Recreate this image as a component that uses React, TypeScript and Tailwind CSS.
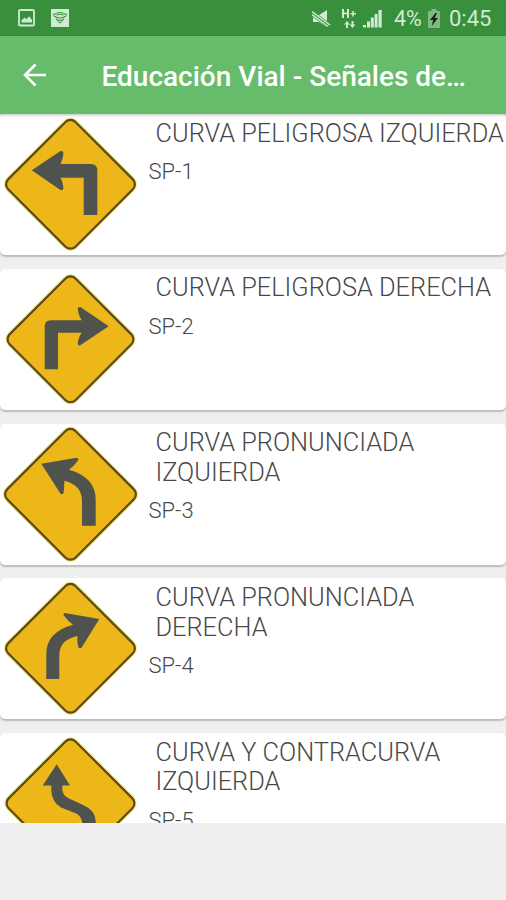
import { ReactNode } from 'react';

type Sign = {
  code: string;
  title: string;
  size: number;
  arrow: string;
};

// size is half the diagonal of the sign's diamond
const signs: Sign[] = [
  {
    code: 'SP-1',
    title: 'CURVA PELIGROSA IZQUIERDA',
    size: 66.3,
    arrow:
      'M31.7 56.3L60.5 37Q63.5 36.5 63.5 39.5Q63 45 60.5 50H91Q97.3 50 97.3 56.5V101H83.7V63.7H60.5Q63 68 63.5 74Q63 77 60.5 76Z',
  },
  {
    code: 'SP-2',
    title: 'CURVA PELIGROSA DERECHA',
    size: 64.8,
    arrow:
      'M108.7 57.3L80.3 38Q77.5 37.5 77.7 40.5Q78.5 46 81.5 51.3H51Q44.7 51.3 44.7 57.5V100.3H58V63.7H81.5Q78.5 68 77.7 73.7Q77.7 77 80.3 76.3Z',
  },
  {
    code: 'SP-3',
    title: 'CURVA PRONUNCIADA IZQUIERDA',
    size: 67.3,
    arrow:
      'M41.3 39.7L76.5 33.7Q79 34.2 78 36.5Q74 42 69 45.7Q95.7 53 95.7 76V101.7H82V77Q82 61 64.3 56.7Q64.5 63 63.5 69Q62 71.5 60 69Z',
  },
  {
    code: 'SP-4',
    title: 'CURVA PRONUNCIADA DERECHA',
    size: 66.3,
    arrow:
      'M99.3 41L65 35Q62.8 35.5 63.8 37.5Q68 43 73 46.7Q46.3 54 46.3 76V101H59.3V77Q59.3 62 77.3 58Q77 64 78.3 69Q80 71.5 82 69Z',
  },
  {
    code: 'SP-5',
    title: 'CURVA Y CONTRACURVA IZQUIERDA',
    size: 65.8,
    arrow:
      'M56.7 31.2L42.7 52.5H51.3V58Q52 69 61 74.5L75 80Q82.3 83 82.3 92V102H95.7V88Q95 77 83 72L70 66Q62.3 63 62.3 56V52.5H70Z',
  },
];

function SignPicture({ size, arrow }: { size: number; arrow: string }) {
  const side = (size + 2) * Math.SQRT2;
  return (
    <svg className="block h-[141px] w-[148px] shrink-0" viewBox="0 0 148 141">
      <g transform="translate(70.5 70.3) rotate(45)">
        <rect x={-side / 2} y={-side / 2} width={side} height={side} rx="8" fill="#edb719" stroke="#eee873" strokeWidth="3" />
        <rect x={-side / 2 + 0.7} y={-side / 2 + 0.7} width={side - 1.4} height={side - 1.4} rx="7" fill="#edb719" stroke="#5c4923" strokeWidth="2.2" />
      </g>
      <path d={arrow} fill="#50534d" />
    </svg>
  );
}

function SignCard({ sign }: { sign: Sign }) {
  return (
    <li className="flex h-[141px] shrink-0 overflow-hidden rounded-[5px] bg-white shadow-[0_1.5px_1.5px_#bdbdbd]">
      <SignPicture size={sign.size} arrow={sign.arrow} />
      <div className="min-w-0 flex-1 pt-[4.5px]">
        <h2 className="-mr-2 pl-[7.5px] text-[25.35px] leading-[29.7px] font-light text-[#484848]">{sign.title}</h2>
        <p className="mt-[9.5px] pl-[0.5px] text-[22px] leading-[27px] font-light text-[#484848]">{sign.code}</p>
      </div>
    </li>
  );
}

function StatusIcon({ width, children }: { width: number; children: ReactNode }) {
  return (
    <svg width={width} height="20" viewBox={`0 0 ${width} 20`} className="shrink-0" fill="#d1ead2">
      {children}
    </svg>
  );
}

function StatusBar() {
  return (
    <div className="flex h-9 shrink-0 items-center bg-[#388f3c] text-[#d1ead2]">
      <div className="flex gap-4 pl-[18px]">
        <StatusIcon width={17}>
          <rect x="1" y="2" width="15" height="15.5" rx="1" fill="none" stroke="#d1ead2" strokeWidth="1.8" />
          <path d="M3.5 14.5v-2l3-3 2 1.8 2.5-3 3 3.5v2.7z" />
        </StatusIcon>
        <StatusIcon width={19}>
          <rect y="1" width="18" height="18" />
          <path
            d="M2 7Q9 2 16 7M3 8Q9 12 15 8M5.5 7Q9 5.5 12.5 7M5 11Q9 14 13 11M7 13.5Q9 16 11 13.5"
            fill="none"
            stroke="#388f3c"
            strokeWidth="1.1"
          />
        </StatusIcon>
      </div>
      <div className="ml-auto flex items-center pt-0.5">
        <StatusIcon width={20}>
          <path d="M1 6h6l8-5v17l-8-5H1z" />
          <path d="M-1 3.5l20 14.5" stroke="#388f3c" strokeWidth="5" />
          <path d="M0 2.5l18 13.5M0 5.5l16 12" stroke="#d1ead2" strokeWidth="1.5" />
        </StatusIcon>
        <svg width="15" height="20" viewBox="0 0 15 20" className="ml-[10px]" fill="#d1ead2">
          <path d="M0 0h2v3.5h3V0h2v9H5V5.3H2V9H0zM10.3 2h1.6v2H14v1.5h-2.1v2h-1.6v-2H8.5V4h1.8z" />
          <path d="M5 12l3 3.5H6V19H4v-3.5H2zM10.5 19l-3-3.5h2V12h2v3.5h2z" />
        </svg>
        <svg width="19" height="20" viewBox="0 0 19 20" className="ml-[6px]" fill="#d1ead2">
          <path d="M0 16h3v2.5H0zM4 12.5h3v6H4zM7.8 8.5h3v10h-3zM11.6 5h3v13.5h-3zM15.5 1h3.2v17.5h-3.2z" />
        </svg>
        <span className="ml-[12px] w-[30px] text-[21.5px] leading-6 whitespace-nowrap">4%</span>
        <svg width="12" height="20" viewBox="0 0 12 20" className="ml-[4px]">
          <path d="M3.5 0h5v2H12v17H0V2h3.5z" fill="#80b782" />
          <path d="M7.5 4L2 11h3.2L3.7 17 10 9H6.7L9 4z" fill="#102612" />
        </svg>
        <span className="ml-[9px] w-[57px] text-[22px] leading-6 whitespace-nowrap">0:45</span>
      </div>
    </div>
  );
}

export default function App() {
  return (
    <div className="flex h-[900px] w-[506px] flex-col overflow-hidden bg-[#efefef] font-[Roboto,sans-serif]">
      <StatusBar />
      <header className="relative flex h-[78px] shrink-0 items-center bg-[#67bc6b] text-white shadow-[0_1px_3px_#0004]">
        <svg width="24" height="24" viewBox="0 0 24 24" className="ml-[23px]" fill="none" stroke="white" strokeWidth="2.6">
          <path d="M23 12H2M12.5 1.5L2 12l10.5 10.5" />
        </svg>
        <h1 className="ml-[54.5px] pt-[3px] text-[28px] font-medium whitespace-nowrap">Educación Vial - Señales de…</h1>
      </header>
      <main className="h-[709px] overflow-hidden">
        <ul className="flex flex-col gap-[13.8px]">
          {signs.map((sign) => (
            <SignCard key={sign.code} sign={sign} />
          ))}
        </ul>
      </main>
    </div>
  );
}
